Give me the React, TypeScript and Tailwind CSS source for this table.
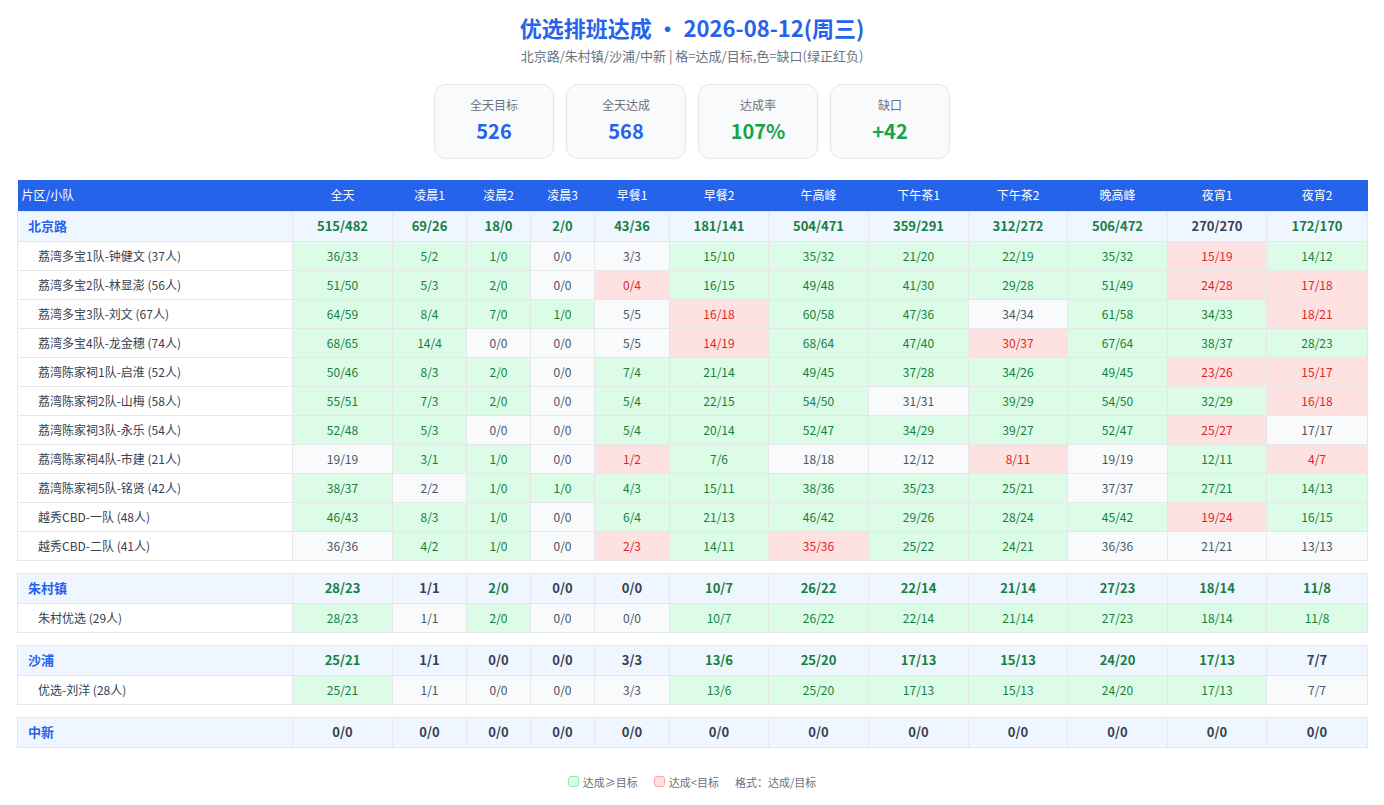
import React from "react";

const COLS = ["全天", "凌晨1", "凌晨2", "凌晨3", "早餐1", "早餐2", "午高峰", "下午茶1", "下午茶2", "晚高峰", "夜宵1", "夜宵2"];

const COL_W = ["w-[100px]", "w-[74px]", "w-[64px]", "w-[64px]", "w-[75px]", "w-[99px]", "w-[100px]", "w-[100px]", "w-[99px]", "w-[100px]", "w-[99px]", "w-[101px]"];

interface Team {
  name: string;
  cells: string[];
}

interface Group {
  name: string;
  total: string[];
  teams: Team[];
}

const split = (s: string) => s.split(" ");

const groups: Group[] = [
  {
    name: "北京路",
    total: split("515/482 69/26 18/0 2/0 43/36 181/141 504/471 359/291 312/272 506/472 270/270 172/170"),
    teams: [
      { name: "荔湾多宝1队-钟健文 (37人)", cells: split("36/33 5/2 1/0 0/0 3/3 15/10 35/32 21/20 22/19 35/32 15/19 14/12") },
      { name: "荔湾多宝2队-林显澎 (56人)", cells: split("51/50 5/3 2/0 0/0 0/4 16/15 49/48 41/30 29/28 51/49 24/28 17/18") },
      { name: "荔湾多宝3队-刘文 (67人)", cells: split("64/59 8/4 7/0 1/0 5/5 16/18 60/58 47/36 34/34 61/58 34/33 18/21") },
      { name: "荔湾多宝4队-龙金穗 (74人)", cells: split("68/65 14/4 0/0 0/0 5/5 14/19 68/64 47/40 30/37 67/64 38/37 28/23") },
      { name: "荔湾陈家祠1队-启淮 (52人)", cells: split("50/46 8/3 2/0 0/0 7/4 21/14 49/45 37/28 34/26 49/45 23/26 15/17") },
      { name: "荔湾陈家祠2队-山梅 (58人)", cells: split("55/51 7/3 2/0 0/0 5/4 22/15 54/50 31/31 39/29 54/50 32/29 16/18") },
      { name: "荔湾陈家祠3队-永乐 (54人)", cells: split("52/48 5/3 0/0 0/0 5/4 20/14 52/47 34/29 39/27 52/47 25/27 17/17") },
      { name: "荔湾陈家祠4队-市建 (21人)", cells: split("19/19 3/1 1/0 0/0 1/2 7/6 18/18 12/12 8/11 19/19 12/11 4/7") },
      { name: "荔湾陈家祠5队-铭贤 (42人)", cells: split("38/37 2/2 1/0 1/0 4/3 15/11 38/36 35/23 25/21 37/37 27/21 14/13") },
      { name: "越秀CBD-一队 (48人)", cells: split("46/43 8/3 1/0 0/0 6/4 21/13 46/42 29/26 28/24 45/42 19/24 16/15") },
      { name: "越秀CBD-二队 (41人)", cells: split("36/36 4/2 1/0 0/0 2/3 14/11 35/36 25/22 24/21 36/36 21/21 13/13") },
    ],
  },
  {
    name: "朱村镇",
    total: split("28/23 1/1 2/0 0/0 0/0 10/7 26/22 22/14 21/14 27/23 18/14 11/8"),
    teams: [{ name: "朱村优选 (29人)", cells: split("28/23 1/1 2/0 0/0 0/0 10/7 26/22 22/14 21/14 27/23 18/14 11/8") }],
  },
  {
    name: "沙浦",
    total: split("25/21 1/1 0/0 0/0 3/3 13/6 25/20 17/13 15/13 24/20 17/13 7/7"),
    teams: [{ name: "优选-刘洋 (28人)", cells: split("25/21 1/1 0/0 0/0 3/3 13/6 25/20 17/13 15/13 24/20 17/13 7/7") }],
  },
  {
    name: "中新",
    total: split("0/0 0/0 0/0 0/0 0/0 0/0 0/0 0/0 0/0 0/0 0/0 0/0"),
    teams: [],
  },
];

const diff = (v: string) => {
  const [a, t] = v.split("/").map(Number);
  return a - t;
};

const cellTone = (v: string) => {
  const d = diff(v);
  if (d > 0) return "bg-[#dcfce7] text-[#15803d]";
  if (d < 0) return "bg-[#fee2e2] text-[#dc2626]";
  return "bg-[#f9fafb] text-[#4b5563]";
};

const totalTone = (v: string) => {
  const d = diff(v);
  if (d > 0) return "text-[#15803d]";
  if (d < 0) return "text-[#dc2626]";
  return "text-[#374151]";
};

function Section({ group, header }: { group: Group; header?: boolean }) {
  return (
    <table className="w-full table-fixed border-collapse">
      <colgroup>
        <col />
        {COL_W.map((w, i) => (
          <col key={i} className={w} />
        ))}
      </colgroup>
      {header && (
        <thead>
          <tr className="bg-[#2563eb] text-white text-xs">
            <th className="h-[31px] pl-1 text-left font-normal">片区/小队</th>
            {COLS.map((c) => (
              <th key={c} className="h-[31px] font-normal text-center">
                {c}
              </th>
            ))}
          </tr>
        </thead>
      )}
      <tbody>
        <tr className="bg-[#eff6ff] text-[13px] font-bold">
          <td className="h-[30px] border border-[#e5e7eb] pl-[10px] text-[#2563eb]">{group.name}</td>
          {group.total.map((v, i) => (
            <td key={i} className={`h-[30px] border border-[#e5e7eb] text-center ${totalTone(v)}`}>
              {v}
            </td>
          ))}
        </tr>
        {group.teams.map((t) => (
          <tr key={t.name} className="text-xs">
            <td className="h-[29px] border border-[#e5e7eb] bg-white pl-5 text-[#374151]">{t.name}</td>
            {t.cells.map((v, i) => (
              <td key={i} className={`h-[29px] border border-[#e5e7eb] text-center ${cellTone(v)}`}>
                {v}
              </td>
            ))}
          </tr>
        ))}
      </tbody>
    </table>
  );
}

const stats = [
  { label: "全天目标", value: "526", color: "text-[#2563eb]" },
  { label: "全天达成", value: "568", color: "text-[#2563eb]" },
  { label: "达成率", value: "107%", color: "text-[#16a34a]" },
  { label: "缺口", value: "+42", color: "text-[#16a34a]" },
];

export default function App() {
  return (
    <div className="min-h-screen bg-white px-4 pt-3 pb-4 font-['Noto_Sans_CJK_SC','Noto_Sans',sans-serif]">
      <h1 className="text-center text-[22px] font-bold leading-[30px] text-[#2563eb]">
        优选排班达成 · 2026-08-12(周三)
      </h1>
      <p className="mt-1 text-center text-[13px] leading-5 text-[#6b7280]">
        北京路/朱村镇/沙浦/中新 | 格=达成/目标,色=缺口(绿正红负)
      </p>

      <div className="mt-[18px] flex justify-center gap-3">
        {stats.map((s) => (
          <div
            key={s.label}
            className="flex h-[75px] w-[120px] flex-col items-center rounded-xl border border-[#e5e7eb] bg-[#f8fafc] pt-3"
          >
            <div className="text-xs leading-4 text-[#6b7280]">{s.label}</div>
            <div className={`mt-1 text-xl font-bold leading-7 ${s.color}`}>{s.value}</div>
          </div>
        ))}
      </div>

      <div className="mt-[21px] flex flex-col gap-3 pl-px">
        {groups.map((g, i) => (
          <Section key={g.name} group={g} header={i === 0} />
        ))}
      </div>

      <div className="mt-[26px] flex items-center justify-center gap-4 text-[11px] text-[#6b7280]">
        <span className="flex items-center gap-1">
          <span className="inline-block h-[11px] w-[11px] rounded-[3px] border border-[#86efac] bg-[#dcfce7]" />
          达成≥目标
        </span>
        <span className="flex items-center gap-1">
          <span className="inline-block h-[11px] w-[11px] rounded-[3px] border border-[#fca5a5] bg-[#fee2e2]" />
          达成&lt;目标
        </span>
        <span>格式：达成/目标</span>
      </div>
    </div>
  );
}
